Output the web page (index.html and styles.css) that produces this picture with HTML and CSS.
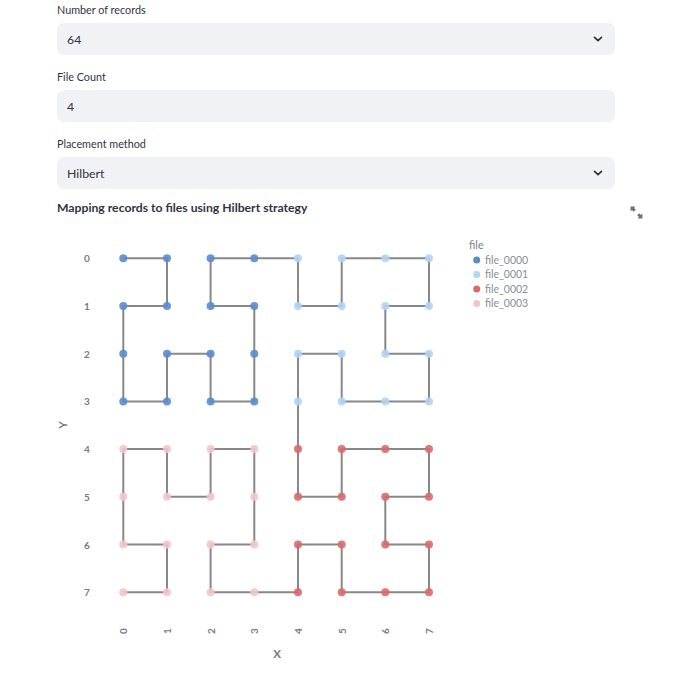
FILE: index.html
```html
<!DOCTYPE html>
<html>
<head>
<meta charset="utf-8">
<link rel="stylesheet" href="styles.css">
</head>
<body>
<div class="main">
  <div class="field">
    <div class="label">Number of records</div>
    <div class="box"><span>64</span>
      <svg class="chev" width="10" height="6" viewBox="0 0 10 6"><path d="M1.5 1.3 L5 4.6 L8.5 1.3" fill="none" stroke="#31333f" stroke-width="1.7" stroke-linecap="round" stroke-linejoin="round"/></svg>
    </div>
  </div>
  <div class="field">
    <div class="label">File Count</div>
    <div class="box"><span>4</span></div>
  </div>
  <div class="field last">
    <div class="label">Placement method</div>
    <div class="box"><span>Hilbert</span>
      <svg class="chev" width="10" height="6" viewBox="0 0 10 6"><path d="M1.5 1.3 L5 4.6 L8.5 1.3" fill="none" stroke="#31333f" stroke-width="1.7" stroke-linecap="round" stroke-linejoin="round"/></svg>
    </div>
  </div>
  <div class="chart">
    <div class="title">Mapping records to files using Hilbert strategy</div>
    <svg class="expand" width="13" height="13" viewBox="0 0 12 12">
      <path d="M0.5 0.5 L5 0.5 L3.7 1.8 L5.4 3.5 L3.5 5.4 L1.8 3.7 L0.5 5 Z" fill="#6f727c"/>
      <path d="M11.5 11.5 L7 11.5 L8.3 10.2 L6.6 8.5 L8.5 6.6 L10.2 8.3 L11.5 7 Z" fill="#6f727c"/>
    </svg>
    <svg class="plot" width="600" height="453" viewBox="0 0 600 453">
      <g class="ytick">
        <text x="30" y="40">0</text>
        <text x="30" y="88">1</text>
        <text x="30" y="135.7">2</text>
        <text x="30" y="183.4">3</text>
        <text x="30" y="231.1">4</text>
        <text x="30" y="278.8">5</text>
        <text x="30" y="326.5">6</text>
        <text x="30" y="374.2">7</text>
      </g>
      <g class="xtick">
        <text transform="translate(66.3,409) rotate(-90)">0</text>
        <text transform="translate(110,409) rotate(-90)">1</text>
        <text transform="translate(153.6,409) rotate(-90)">2</text>
        <text transform="translate(197.3,409) rotate(-90)">3</text>
        <text transform="translate(241,409) rotate(-90)">4</text>
        <text transform="translate(284.7,409) rotate(-90)">5</text>
        <text transform="translate(328.3,409) rotate(-90)">6</text>
        <text transform="translate(372,409) rotate(-90)">7</text>
      </g>
      <text class="axtitle" x="220" y="436">X</text>
      <text class="axtitle" transform="translate(10,203) rotate(-90)">Y</text>

      <polyline class="curve" points="66.3,36.3 110,36.3 110,84 66.3,84 66.3,131.7 66.3,179.4 110,179.4 110,131.7 153.6,131.7 153.6,179.4 197.3,179.4 197.3,131.7 197.3,84 153.6,84 153.6,36.3 197.3,36.3 241,36.3 241,84 284.7,84 284.7,36.3 328.3,36.3 372,36.3 372,84 328.3,84 328.3,131.7 372,131.7 372,179.4 328.3,179.4 284.7,179.4 284.7,131.7 241,131.7 241,179.4 241,227.1 241,274.8 284.7,274.8 284.7,227.1 328.3,227.1 372,227.1 372,274.8 328.3,274.8 328.3,322.5 372,322.5 372,370.2 328.3,370.2 284.7,370.2 284.7,322.5 241,322.5 241,370.2 197.3,370.2 153.6,370.2 153.6,322.5 197.3,322.5 197.3,274.8 197.3,227.1 153.6,227.1 153.6,274.8 110,274.8 110,227.1 66.3,227.1 66.3,274.8 66.3,322.5 110,322.5 110,370.2 66.3,370.2"/>

      <g class="m f0">
        <circle cx="66.3" cy="36.3" r="4"/><circle cx="110" cy="36.3" r="4"/><circle cx="153.6" cy="36.3" r="4"/><circle cx="197.3" cy="36.3" r="4"/>
        <circle cx="66.3" cy="84" r="4"/><circle cx="110" cy="84" r="4"/><circle cx="153.6" cy="84" r="4"/><circle cx="197.3" cy="84" r="4"/>
        <circle cx="66.3" cy="131.7" r="4"/><circle cx="110" cy="131.7" r="4"/><circle cx="153.6" cy="131.7" r="4"/><circle cx="197.3" cy="131.7" r="4"/>
        <circle cx="66.3" cy="179.4" r="4"/><circle cx="110" cy="179.4" r="4"/><circle cx="153.6" cy="179.4" r="4"/><circle cx="197.3" cy="179.4" r="4"/>
      </g>
      <g class="m f1">
        <circle cx="241" cy="36.3" r="4"/><circle cx="284.7" cy="36.3" r="4"/><circle cx="328.3" cy="36.3" r="4"/><circle cx="372" cy="36.3" r="4"/>
        <circle cx="241" cy="84" r="4"/><circle cx="284.7" cy="84" r="4"/><circle cx="328.3" cy="84" r="4"/><circle cx="372" cy="84" r="4"/>
        <circle cx="241" cy="131.7" r="4"/><circle cx="284.7" cy="131.7" r="4"/><circle cx="328.3" cy="131.7" r="4"/><circle cx="372" cy="131.7" r="4"/>
        <circle cx="241" cy="179.4" r="4"/><circle cx="284.7" cy="179.4" r="4"/><circle cx="328.3" cy="179.4" r="4"/><circle cx="372" cy="179.4" r="4"/>
      </g>
      <g class="m f2">
        <circle cx="241" cy="227.1" r="4"/><circle cx="284.7" cy="227.1" r="4"/><circle cx="328.3" cy="227.1" r="4"/><circle cx="372" cy="227.1" r="4"/>
        <circle cx="241" cy="274.8" r="4"/><circle cx="284.7" cy="274.8" r="4"/><circle cx="328.3" cy="274.8" r="4"/><circle cx="372" cy="274.8" r="4"/>
        <circle cx="241" cy="322.5" r="4"/><circle cx="284.7" cy="322.5" r="4"/><circle cx="328.3" cy="322.5" r="4"/><circle cx="372" cy="322.5" r="4"/>
        <circle cx="241" cy="370.2" r="4"/><circle cx="284.7" cy="370.2" r="4"/><circle cx="328.3" cy="370.2" r="4"/><circle cx="372" cy="370.2" r="4"/>
      </g>
      <g class="m f3">
        <circle cx="66.3" cy="227.1" r="4"/><circle cx="110" cy="227.1" r="4"/><circle cx="153.6" cy="227.1" r="4"/><circle cx="197.3" cy="227.1" r="4"/>
        <circle cx="66.3" cy="274.8" r="4"/><circle cx="110" cy="274.8" r="4"/><circle cx="153.6" cy="274.8" r="4"/><circle cx="197.3" cy="274.8" r="4"/>
        <circle cx="66.3" cy="322.5" r="4"/><circle cx="110" cy="322.5" r="4"/><circle cx="153.6" cy="322.5" r="4"/><circle cx="197.3" cy="322.5" r="4"/>
        <circle cx="66.3" cy="370.2" r="4"/><circle cx="110" cy="370.2" r="4"/><circle cx="153.6" cy="370.2" r="4"/><circle cx="197.3" cy="370.2" r="4"/>
      </g>

      <g class="legend">
        <text class="lgtitle" x="412" y="27">file</text>
        <circle class="f0" cx="419.7" cy="38" r="3.5"/><text x="428" y="41.5">file_0000</text>
        <circle class="f1" cx="419.7" cy="52.5" r="3.5"/><text x="428" y="56">file_0001</text>
        <circle class="f2" cx="419.7" cy="67" r="3.5"/><text x="428" y="70.5">file_0002</text>
        <circle class="f3" cx="419.7" cy="81.5" r="3.5"/><text x="428" y="85">file_0003</text>
      </g>
    </svg>
  </div>
</div>
</body>
</html>
```
FILE: styles.css
```css
body {
  margin: 0;
  background: #ffffff;
  color: #31333f;
  font-family: Lato, "Open Sans", sans-serif;
}

.main {
  width: 558px;
  margin-left: 57px;
  padding-top: 2px;
}

.field {
  margin-bottom: 14px;
}

.field.last {
  margin-bottom: 10px;
}

.label {
  font-size: 10.8px;
  line-height: 16px;
  margin-bottom: 5px;
}

.box {
  box-sizing: border-box;
  height: 32px;
  background: #f0f2f6;
  border-radius: 7px;
  display: flex;
  align-items: center;
  justify-content: space-between;
  padding: 0 12px 0 10px;
  font-size: 12.3px;
}

.chev {
  display: block;
}

.chart {
  position: relative;
}

.title {
  font-size: 12.2px;
  font-weight: 700;
  line-height: 18px;
  margin-bottom: 5px;
}

.expand {
  position: absolute;
  top: 7px;
  right: -28px;
}

.plot {
  display: block;
  overflow: visible;
  font-family: Lato, "Open Sans", sans-serif;
}

.ytick text {
  font-size: 10px;
  font-weight: 700;
  fill: #767985;
  text-anchor: middle;
}

.xtick text {
  font-size: 10px;
  font-weight: 700;
  fill: #767985;
  text-anchor: middle;
  dominant-baseline: central;
}

.axtitle {
  font-size: 11.5px;
  font-weight: 700;
  fill: #767985;
  text-anchor: middle;
}

.curve {
  fill: none;
  stroke: #888888;
  stroke-width: 2;
}

.m circle {
  fill-opacity: 0.9;
}

.f0 { fill: #5b8bd0; }
.f1 { fill: #b0d5f5; }
.f2 { fill: #de6868; }
.f3 { fill: #f3c6c4; }

.legend text {
  font-size: 10.5px;
  fill: #8a8d98;
}

.legend .lgtitle {
  font-size: 11px;
  fill: #7d808c;
}
```
